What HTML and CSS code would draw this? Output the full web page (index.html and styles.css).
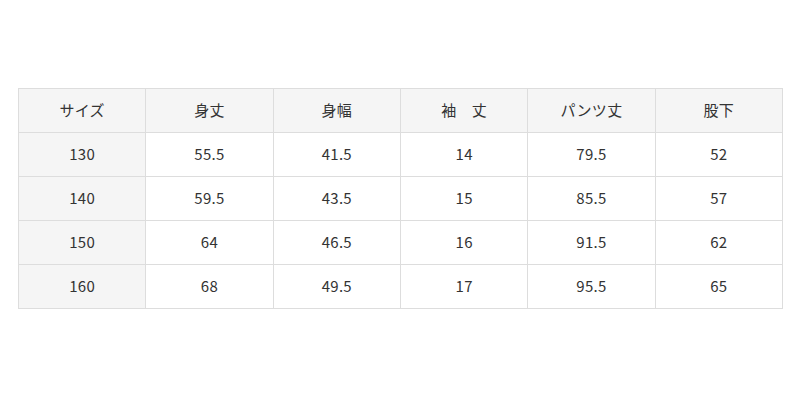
FILE: index.html
```html
<!DOCTYPE html>
<html lang="ja">
<head>
<meta charset="utf-8">
<link rel="stylesheet" href="styles.css">
</head>
<body>
<div class="wrap">
<table class="size-table">
<thead>
<tr><th>サイズ</th><th>身丈</th><th>身幅</th><th>袖　丈</th><th>パンツ丈</th><th>股下</th></tr>
</thead>
<tbody>
<tr><th>130</th><td>55.5</td><td>41.5</td><td>14</td><td>79.5</td><td>52</td></tr>
<tr><th>140</th><td>59.5</td><td>43.5</td><td>15</td><td>85.5</td><td>57</td></tr>
<tr><th>150</th><td>64</td><td>46.5</td><td>16</td><td>91.5</td><td>62</td></tr>
<tr><th>160</th><td>68</td><td>49.5</td><td>17</td><td>95.5</td><td>65</td></tr>
</tbody>
</table>
</div>
</body>
</html>
```
FILE: styles.css
```css
html, body {
  margin: 0;
  padding: 0;
  background: #fff;
}
.wrap {
  padding: 88px 17px 0 18px;
}
.size-table {
  width: 765px;
  border-collapse: collapse;
  table-layout: fixed;
  font-family: "Noto Sans CJK JP", "Noto Sans", sans-serif;
  font-size: 15px;
  letter-spacing: 0.3px;
  color: #333;
}
.size-table th,
.size-table td {
  border: 1px solid #ddd;
  height: 43px;
  padding: 0 0 2px 0;
  box-sizing: border-box;
  text-align: center;
  vertical-align: middle;
  font-weight: normal;
}
.size-table tr {
  height: 44px;
}
.size-table thead th,
.size-table tbody th {
  background: #f5f5f5;
}
.size-table td {
  background: #fff;
}
```
